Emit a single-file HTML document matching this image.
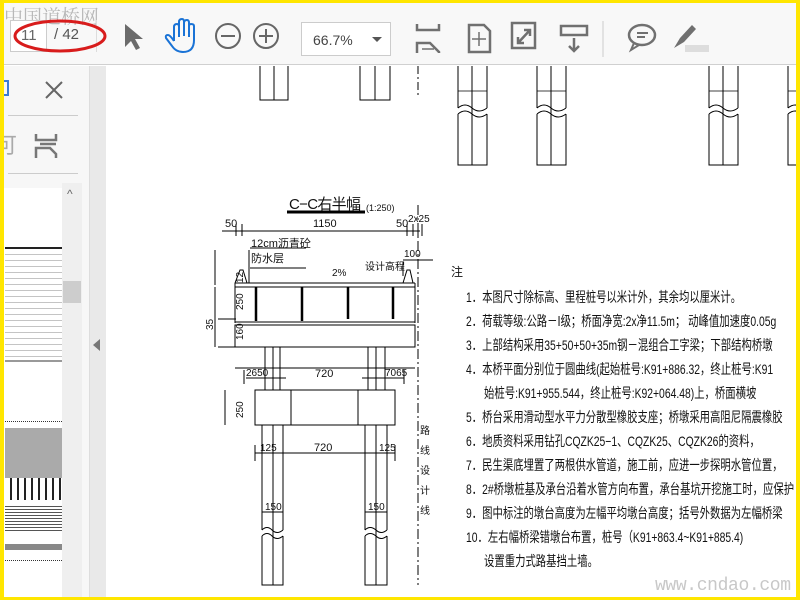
<!DOCTYPE html>
<html><head><meta charset="utf-8"><style>
*{margin:0;padding:0;box-sizing:border-box}
html,body{width:800px;height:600px;overflow:hidden}
body{background:#ffe600;position:relative;font-family:"Liberation Sans","Noto Sans CJK SC",sans-serif}
#app{position:absolute;left:4px;top:3px;width:792px;height:594px;background:#fff;overflow:hidden}
#tb{position:absolute;left:0;top:0;width:792px;height:62px;background:#f8f8f8;border-bottom:1px solid #d0d0d0}
#lp{position:absolute;left:0;top:63px;width:86px;height:531px;background:#f7f7f7;border-right:1px solid #ddd}
#gap{position:absolute;left:86px;top:63px;width:16px;height:531px;background:#e9e9e9}
.abs{position:absolute}
#notes{position:absolute;left:440px;top:250px;width:356px;height:340px;overflow:hidden}
#notes div{position:absolute;left:26px;font-size:14px;white-space:nowrap;color:#111;font-family:"Liberation Sans","WenQuanYi Zen Hei",sans-serif;transform:scaleX(0.74);transform-origin:0 0}
</style></head><body>
<div id="app">
<div id="tb">
 <div class="abs" style="left:0;top:-1px;font-size:19px;color:#b8b8b8;letter-spacing:0px;font-family:'Noto Serif CJK SC',serif">中国道桥网</div>
 <div class="abs" style="left:6px;top:17px;width:37px;height:32px;border:1px solid #ccc;background:#fff;font-size:15px;color:#666;padding:6px 0 0 10px">11</div>
 <div class="abs" style="left:50px;top:23px;font-size:15px;color:#555">/ 42</div>
 <div class="abs" style="left:92px;top:17px;width:1px;height:32px;background:#ddd"></div>
 <svg class="abs" style="left:0;top:0" width="792" height="62">
  <ellipse cx="56" cy="33" rx="45" ry="15" fill="none" stroke="#d81c1c" stroke-width="3"/>
  <path d="M121 21 L121 44 L127 38 L132 47 L136 45 L131 36 L139 36 Z" fill="#6b6b6b"/>
  <path d="M170 38 L170 24 Q170 21 173 21 Q175 21 175 24 L175 34 M175 24 L175 19 Q175 16 178 16 Q180 16 180 19 L180 33 M180 20 Q180 17 183 17 Q185 17 185 20 L185 34 M185 23 Q185 21 187 21 Q190 21 190 23 L190 37 Q190 49 179 49 Q172 49 168 43 L162 35 Q161 32 164 32 Q166 32 170 38" fill="none" stroke="#1a73d6" stroke-width="2"/>
  <circle cx="224" cy="33" r="12" fill="none" stroke="#666" stroke-width="2"/><path d="M217 33h14" stroke="#666" stroke-width="2"/>
  <circle cx="262" cy="33" r="12" fill="none" stroke="#666" stroke-width="2"/><path d="M255 33h14M262 26v14" stroke="#666" stroke-width="2"/>
  <path d="M413 21v6h22v-6M413 50v-10h13l9 9v1" fill="none" stroke="#707070" stroke-width="2.5"/>
  <path d="M418 46h12" stroke="#707070" stroke-width="1.5"/>
  <path d="M465 22h15l6 6v21h-21z" fill="none" stroke="#707070" stroke-width="2.5"/>
  <path d="M475 29v14M468 36h14" stroke="#707070" stroke-width="1.5"/>
  <rect x="508" y="20" width="23" height="25" fill="none" stroke="#707070" stroke-width="2.5"/>
  <path d="M514 40l12-13M520 27h6v6M514 34v6h6" fill="none" stroke="#707070" stroke-width="2.5"/>
  <rect x="557" y="23" width="26" height="9" fill="none" stroke="#707070" stroke-width="2.5"/>
  <path d="M570 35v13M565 43l5 5 5-5" fill="none" stroke="#707070" stroke-width="2.5"/>
  <path d="M599 18v36" stroke="#ccc"/>
  <ellipse cx="638" cy="32" rx="13" ry="10" fill="none" stroke="#707070" stroke-width="2.5"/>
  <path d="M630 40l-3 7 8-5M633 30h11M633 34h8" fill="none" stroke="#707070" stroke-width="2"/>
  <path d="M670 45l6-10 12-13 4 4-12 13z" fill="#707070"/>
  <rect x="681" y="42" width="24" height="7" fill="#ddd"/>
 </svg>
 <div class="abs" style="left:297px;top:19px;width:90px;height:34px;border:1px solid #ccc;background:#fff;font-size:14px;color:#444;padding:9px 0 0 11px">66.7%<span style="position:absolute;right:8px;top:14px;border:5px solid transparent;border-top:5px solid #555"></span></div>
</div>
<div id="lp">
 <div class="abs" style="left:0;top:14px;width:5px;height:16px;border:2px solid #3a7bd5;border-left:none"></div>
 <svg class="abs" style="left:40px;top:14px" width="20" height="20"><path d="M2 2L18 18M18 2L2 18" stroke="#666" stroke-width="2"/></svg>
 <div class="abs" style="left:4px;top:49px;width:70px;height:1px;background:#ccc"></div>
 <div class="abs" style="left:-9px;top:62px;font-size:22px;color:#aaa">可</div>
 <svg class="abs" style="left:30px;top:66px" width="26" height="28"><path d="M2 2v6h20V2M2 26V16h14l6 6v4M6 12h16" fill="none" stroke="#777" stroke-width="2.5"/></svg>
 <div class="abs" style="left:4px;top:107px;width:70px;height:1px;background:#ccc"></div>
 <div class="abs" style="left:0;top:122px;width:58px;height:472px;background:#fff"></div>
 <div class="abs" style="left:58px;top:117px;width:20px;height:477px;background:#efefef"></div>
 <div class="abs" style="left:63px;top:121px;font-size:12px;color:#666">^</div>
 <div class="abs" style="left:59px;top:215px;width:18px;height:22px;background:#cdcdcd"></div>
 <div class="abs" style="left:1px;top:178px;width:57px;height:118px;background:repeating-linear-gradient(0deg,#fff 0 5px,#888 5px 6px);opacity:.5"></div>
 <div class="abs" style="left:1px;top:181px;width:57px;height:2px;background:#222"></div>
 <div class="abs" style="left:1px;top:294px;width:57px;height:2px;background:#999"></div>
 <div class="abs" style="left:1px;top:355px;width:57px;height:1px;border-top:1px dotted #333"></div>
 <div class="abs" style="left:1px;top:362px;width:57px;height:50px;background:#aaa"></div>
 <div class="abs" style="left:1px;top:412px;width:57px;height:22px;background:repeating-linear-gradient(90deg,#fff 0 5px,#222 5px 7px)"></div>
 <div class="abs" style="left:1px;top:440px;width:57px;height:27px;background:repeating-linear-gradient(0deg,#fff 0 2px,#555 2px 3px)"></div>
 <div class="abs" style="left:1px;top:478px;width:57px;height:6px;background:#888"></div>
 <div class="abs" style="left:1px;top:494px;width:57px;height:1px;border-top:1px dotted #333"></div>
</div>
<div id="gap"><div class="abs" style="left:3px;top:273px;border:6px solid transparent;border-right:7px solid #777;border-left:none"></div></div>
</div>
<svg class="abs" style="left:0;top:0;position:absolute" width="800" height="600">
<defs><clipPath id="c"><rect x="106" y="66" width="690" height="531"/></clipPath></defs>
<g clip-path="url(#c)" stroke="#000" fill="none" stroke-width="1">
 <path d="M260 66v34h28V66M274 66v34M360 66v34h30V66M375 66v34"/>
 <path d="M418 66v32" stroke-dasharray="8 3 2 3"/>
 <g id="pp"><path d="M458 66v42M487 66v42M458 114v51h29v-51M472 66v99" /><path d="M458 108q7-6 14 0q7 6 15 0M458 114q7-6 14 0q7 6 15 0"/><path d="M458 91h29" stroke-width=".8"/></g>
 <use href="#pp" x="79"/><use href="#pp" x="251"/><use href="#pp" x="330"/>
 <path d="M287 212h78" stroke-width="3"/>
 <path d="M222 231h198M236 224v12M242 224v12M407 224v12M413 224v12M418 224v12M422 224v12"/>
 <path d="M250 248h56M250 268h56M249 250v33M403 260h30M403 262v14"/>
 <path d="M235 283h180M235 287h180M235 283v40M415 283v40M235 322h180"/>
 <path d="M235 283l5-13h3l4 13M413 283l-3-13h-3l-4 13"/>
 <g stroke-width="2.5"><path d="M256 287v34M302 287v34M348 287v32M393 287v32"/></g>
 <path d="M235 325h180v22H235zM265 347v43M280 347v43M368 347v43M385 347v43M273 347v43M376 347v43"/>
 <path d="M235 368h180"/>
 <path d="M255 390h140v35H255zM291 390v35M358 390v35"/>
 <path d="M262 425v105M283 425v105M273 425v160M365 425v105M387 425v105M376 425v160M262 536v49h21v-49M365 536v49h22v-49"/>
 <path d="M262 530q5-5 10 0q5 5 11 0M262 536q5-5 10 0q5 5 11 0M365 530q5-5 11 0q5 5 11 0M365 536q5-5 11 0q5 5 11 0"/>
 <path d="M255 453h140M255 445v16M395 445v16M246 378h40M362 378h42M244 370v14M404 370v14M225 390v35M262 512h21M365 512h22"/>
 <path d="M418 205v380" stroke-dasharray="10 3 2 3"/>
 <path d="M215 287v60M215 250v35M218 319h18M218 347h18"/>
</g>
<g font-family="Liberation Sans,WenQuanYi Zen Hei,sans-serif" font-size="11" fill="#111">
 <text x="289" y="209" font-size="15" textLength="72">C−C右半幅</text><text x="366" y="211" font-size="9">(1:250)</text>
 <text x="225" y="227">50</text><text x="313" y="227">1150</text><text x="396" y="227">50</text><text x="408" y="222" font-size="10">2x25</text>
 <text x="251" y="247">12cm沥青砼</text><text x="251" y="262">防水层</text><text x="365" y="270" font-size="10">设计高程</text>
 <text x="404" y="257" font-size="10">100</text><text x="332" y="276" font-size="10">2%</text>
 <text x="246" y="376" font-size="10">2650</text><text x="315" y="377">720</text><text x="385" y="376" font-size="10">7065</text>
 <text x="260" y="451" font-size="10">125</text><text x="314" y="451">720</text><text x="379" y="451" font-size="10">125</text>
 <text x="265" y="510" font-size="10">150</text><text x="368" y="510" font-size="10">150</text>
 <text transform="translate(243 283) rotate(-90)" font-size="10">12</text>
 <text transform="translate(243 310) rotate(-90)" font-size="10">250</text>
 <text transform="translate(243 340) rotate(-90)" font-size="10">160</text>
 <text transform="translate(213 330) rotate(-90)" font-size="10">35</text>
 <text transform="translate(243 418) rotate(-90)" font-size="10">250</text>
 <g font-size="10"><text x="420" y="434">路</text><text x="420" y="454">线</text><text x="420" y="474">设</text><text x="420" y="494">计</text><text x="420" y="514">线</text></g>
 <text x="451" y="276" font-size="12">注</text>
 <text x="655" y="590" font-size="18" fill="#c8c8c8" font-family="Liberation Mono,monospace" textLength="136">www.cndao.com</text>
</g>
</svg>
<div id="notes">
<div style="top:37px">1．本图尺寸除标高、里程桩号以米计外，其余均以厘米计。</div>
<div style="top:61px">2．荷载等级:公路－Ⅰ级；桥面净宽:2x净11.5m； 动峰值加速度0.05g</div>
<div style="top:85px">3．上部结构采用35+50+50+35m钢－混组合工字梁；下部结构桥墩</div>
<div style="top:109px">4．本桥平面分别位于圆曲线(起始桩号:K91+886.32，终止桩号:K91</div>
<div style="top:133px;left:44px">始桩号:K91+955.544，终止桩号:K92+064.48)上，桥面横坡</div>
<div style="top:157px">5．桥台采用滑动型水平力分散型橡胶支座；桥墩采用高阻尼隔震橡胶</div>
<div style="top:181px">6．地质资料采用钻孔CQZK25−1、CQZK25、CQZK26的资料，</div>
<div style="top:205px">7．民生渠底埋置了两根供水管道，施工前，应进一步探明水管位置，</div>
<div style="top:229px">8．2#桥墩桩基及承台沿着水管方向布置，承台基坑开挖施工时，应保护</div>
<div style="top:253px">9．图中标注的墩台高度为左幅平均墩台高度；括号外数据为左幅桥梁</div>
<div style="top:277px">10．左右幅桥梁错墩台布置，桩号（K91+863.4~K91+885.4)</div>
<div style="top:301px;left:44px">设置重力式路基挡土墙。</div>
</div>
<div style="position:absolute;left:796px;top:0;width:4px;height:600px;background:#ffe600"></div>
<div style="position:absolute;left:0;top:597px;width:800px;height:3px;background:#ffe600"></div>
</body></html>
